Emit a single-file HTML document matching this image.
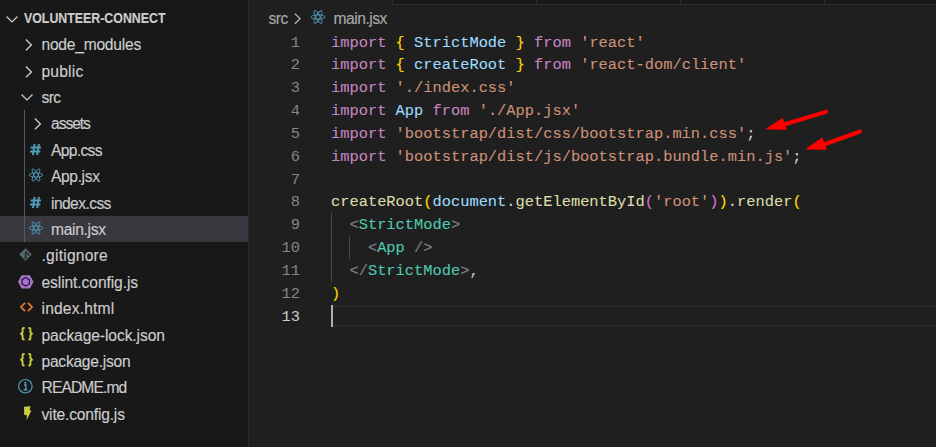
<!DOCTYPE html>
<html><head><meta charset="utf-8"><style>
html,body{margin:0;padding:0;}
body{width:936px;height:447px;overflow:hidden;background:#1f1f1f;position:relative;font-family:"Liberation Sans",sans-serif;}
#side{position:absolute;left:0;top:0;width:248px;height:447px;background:#181818;}
#sb{position:absolute;left:248px;top:0;width:1px;height:447px;background:#2b2b2b;}
.row{position:absolute;left:0;width:248px;height:26.4px;}
.lbl{position:absolute;color:#cccccc;-webkit-text-stroke:0.15px currentColor;font-size:15.6px;letter-spacing:0.0px;white-space:nowrap;line-height:26.4px;top:1.0px;}
.sel{background:#37373d;}
.guide{position:absolute;left:24px;width:1px;background:#585858;}
svg{position:absolute;overflow:visible;}
#tabs{position:absolute;left:392px;top:0;width:544px;height:4px;background:#181818;border-left:1px solid #2b2b2b;border-bottom:1px solid #2b2b2b;}
.tsep{position:absolute;top:0;width:1px;height:4px;background:#2b2b2b;}
.cl{position:absolute;left:0;width:936px;height:22.83px;}
.code{position:absolute;-webkit-text-stroke:0.1px currentColor;left:331.0px;top:1.0px;font-family:"Liberation Mono",monospace;font-size:15.39px;letter-spacing:0.0px;white-space:pre;color:#cccccc;line-height:22.83px;}
.ln{position:absolute;right:636px;top:1.0px;text-align:right;font-family:"Liberation Mono",monospace;font-size:15.39px;color:#6e7681;line-height:22.83px;}
.k{color:#c586c0}.s{color:#ce9178}.v{color:#9cdcfe}.f{color:#dcdcaa}.t{color:#4ec9b0}.g{color:#808080}.b1{color:#ffd700}.b2{color:#da70d6}
</style></head><body>
<div id="side"><div class="row" style="top:4.70px"><svg style="left:5.8px;top:10.9px" width="12" height="7" viewBox="0 0 12 7"><path d="M0.5 0.6 L6 5.9 L11.5 0.6" fill="none" stroke="#cccccc" stroke-width="1.35"/></svg><div class="lbl" style="left:24px;top:0px;font-weight:bold;font-size:13.9px;letter-spacing:0px;transform:scaleX(0.8900);transform-origin:0 0">VOLUNTEER-CONNECT</div></div><div class="row" style="top:31.10px"><svg style="left:24.6px;top:8px" width="8" height="12" viewBox="0 0 8 12"><path d="M0.9 0.5 L6.4 5.9 L0.9 11.3" fill="none" stroke="#cccccc" stroke-width="1.35"/></svg><div class="lbl" style="left:41.5px;letter-spacing:-0.238px">node_modules</div></div><div class="row" style="top:57.50px"><svg style="left:24.6px;top:8px" width="8" height="12" viewBox="0 0 8 12"><path d="M0.9 0.5 L6.4 5.9 L0.9 11.3" fill="none" stroke="#cccccc" stroke-width="1.35"/></svg><div class="lbl" style="left:41.5px;letter-spacing:0.200px">public</div></div><div class="row" style="top:83.90px"><svg style="left:21.2px;top:9.8px" width="12" height="7" viewBox="0 0 12 7"><path d="M0.5 0.6 L6 5.9 L11.5 0.6" fill="none" stroke="#cccccc" stroke-width="1.35"/></svg><div class="lbl" style="left:41.5px;letter-spacing:-0.600px">src</div></div><div class="row" style="top:110.30px"><svg style="left:34.2px;top:8px" width="8" height="12" viewBox="0 0 8 12"><path d="M0.9 0.5 L6.4 5.9 L0.9 11.3" fill="none" stroke="#cccccc" stroke-width="1.35"/></svg><div class="lbl" style="left:51px;letter-spacing:-1.040px">assets</div></div><div class="row" style="top:136.70px"><svg style="left:29.9px;top:7.300000000000011px" width="11" height="11" viewBox="0 0 11 11"><path d="M4.6 0 L2.9 11 M8.9 0 L7.2 11 M0.6 3.6 H11 M0 7.4 H10.4" fill="none" stroke="#519aba" stroke-width="2"/></svg><div class="lbl" style="left:51px;letter-spacing:-0.667px">App.css</div></div><div class="row" style="top:163.10px"><svg style="left:27.6px;top:5.30000000000004px" width="16" height="14" viewBox="-8 -7 16 14"><g fill="none" stroke="#519aba" stroke-width="0.85"><ellipse rx="6.9" ry="2.05"/><ellipse rx="6.9" ry="2.05" transform="rotate(60)"/><ellipse rx="6.9" ry="2.05" transform="rotate(-60)"/></g></svg><div class="lbl" style="left:51px;letter-spacing:-0.366px">App.jsx</div></div><div class="row" style="top:189.50px"><svg style="left:29.9px;top:7.300000000000011px" width="11" height="11" viewBox="0 0 11 11"><path d="M4.6 0 L2.9 11 M8.9 0 L7.2 11 M0.6 3.6 H11 M0 7.4 H10.4" fill="none" stroke="#519aba" stroke-width="2"/></svg><div class="lbl" style="left:51px;letter-spacing:-0.575px">index.css</div></div><div class="row sel" style="top:215.90px"><svg style="left:27.6px;top:5.30000000000004px" width="16" height="14" viewBox="-8 -7 16 14"><g fill="none" stroke="#519aba" stroke-width="0.85"><ellipse rx="6.9" ry="2.05"/><ellipse rx="6.9" ry="2.05" transform="rotate(60)"/><ellipse rx="6.9" ry="2.05" transform="rotate(-60)"/></g></svg><div class="lbl" style="left:51px;letter-spacing:-0.316px">main.jsx</div></div><div class="row" style="top:242.30px"><svg style="left:19px;top:5.600000000000023px" width="13" height="13" viewBox="0 0 13 13"><path d="M6.5 0.2 L12.8 6.5 L6.5 12.8 L0.2 6.5 Z" fill="#56676e"/><path d="M6.6 3.4 V10 M6.6 3.6 L9.6 6.6" stroke="#1e2629" stroke-width="1.3" fill="none"/><circle cx="6.6" cy="10" r="1.1" fill="#1e2629"/><circle cx="9.5" cy="6.6" r="0.9" fill="#1e2629"/></svg><div class="lbl" style="left:41.5px;letter-spacing:0.223px">.gitignore</div></div><div class="row" style="top:268.70px"><svg style="left:18.3px;top:6.0px" width="16" height="14" viewBox="0 0 16 14"><path d="M3.6 0.2 H11.9 L15.5 6.8 L11.9 13.4 H3.6 L0 6.8 Z" fill="#a676c8"/><path d="M7.75 2.5 L11.4 4.65 V8.95 L7.75 11.1 L4.1 8.95 V4.65 Z" fill="none" stroke="#2a1545" stroke-width="1.3"/></svg><div class="lbl" style="left:41.5px;letter-spacing:-0.092px">eslint.config.js</div></div><div class="row" style="top:295.10px"><svg style="left:19.6px;top:7.400000000000034px" width="13" height="10" viewBox="0 0 13 10"><path d="M5 0.8 L1 5 L5 9.2 M8 0.8 L12 5 L8 9.2" fill="none" stroke="#e37933" stroke-width="1.8"/></svg><div class="lbl" style="left:41.5px;letter-spacing:0.177px">index.html</div></div><div class="row" style="top:321.50px"><svg style="left:19.6px;top:5.300000000000068px" width="13" height="13.5" viewBox="0 0 13 13.5"><path d="M4.6 1 H3.7 Q2.6 1 2.6 2.1 V5.3 L1.1 6.75 L2.6 8.2 V11.4 Q2.6 12.5 3.7 12.5 H4.6" fill="none" stroke="#cbcb41" stroke-width="1.9" stroke-linejoin="miter"/><path d="M8.4 1 H9.3 Q10.4 1 10.4 2.1 V5.3 L11.9 6.75 L10.4 8.2 V11.4 Q10.4 12.5 9.3 12.5 H8.4" fill="none" stroke="#cbcb41" stroke-width="1.9" stroke-linejoin="miter"/></svg><div class="lbl" style="left:41.5px;letter-spacing:-0.086px">package-lock.json</div></div><div class="row" style="top:347.90px"><svg style="left:19.6px;top:5.300000000000068px" width="13" height="13.5" viewBox="0 0 13 13.5"><path d="M4.6 1 H3.7 Q2.6 1 2.6 2.1 V5.3 L1.1 6.75 L2.6 8.2 V11.4 Q2.6 12.5 3.7 12.5 H4.6" fill="none" stroke="#cbcb41" stroke-width="1.9" stroke-linejoin="miter"/><path d="M8.4 1 H9.3 Q10.4 1 10.4 2.1 V5.3 L11.9 6.75 L10.4 8.2 V11.4 Q10.4 12.5 9.3 12.5 H8.4" fill="none" stroke="#cbcb41" stroke-width="1.9" stroke-linejoin="miter"/></svg><div class="lbl" style="left:41.5px;letter-spacing:-0.253px">package.json</div></div><div class="row" style="top:374.30px"><svg style="left:18.3px;top:4.900000000000034px" width="15" height="15" viewBox="0 0 15 15"><circle cx="7.35" cy="7.25" r="6.75" fill="none" stroke="#519aba" stroke-width="1.2"/><circle cx="7.35" cy="3.9" r="1.05" fill="#519aba"/><path d="M6 6 H7.9 V10.6 M5.6 10.8 H9.3" fill="none" stroke="#519aba" stroke-width="1.4"/></svg><div class="lbl" style="left:41.5px;letter-spacing:-0.875px">README.md</div></div><div class="row" style="top:400.70px"><svg style="left:22.8px;top:4.900000000000034px" width="9" height="15" viewBox="0 0 9 15"><path d="M1.1 0.7 L7.4 0.3 L6.7 4.3 L8.3 4.7 L3.6 14.3 L3.8 9.2 L1.1 8.8 Z" fill="#cbcb41"/></svg><div class="lbl" style="left:41.5px;letter-spacing:-0.183px">vite.config.js</div></div><div class="guide" style="top:110.30px;height:132.00px"></div></div><div id="sb"></div>
<div id="tabs"><div class="tsep" style="left:143px"></div><div class="tsep" style="left:287px"></div><div class="tsep" style="left:431px"></div></div>
<div class="lbl" style="left:268.5px;top:8.3px;color:#a9a9a9;line-height:22px;letter-spacing:-0.500px">src</div><svg style="left:294.3px;top:12.9px" width="7" height="12" viewBox="0 0 7 12"><path d="M0.8 0.6 L6.1 5.7 L0.8 10.8" fill="none" stroke="#b4b4b4" stroke-width="1.3"/></svg><svg style="left:310.4px;top:10.399999999999999px" width="16" height="14" viewBox="-8 -7 16 14"><g fill="none" stroke="#519aba" stroke-width="0.9"><ellipse rx="7.1" ry="2.15"/><ellipse rx="7.1" ry="2.15" transform="rotate(60)"/><ellipse rx="7.1" ry="2.15" transform="rotate(-60)"/></g></svg><div class="lbl" style="left:333.6px;top:8.3px;color:#a9a9a9;line-height:22px;letter-spacing:-0.486px">main.jsx</div>
<div class="cl" style="top:30.60px"><div class="ln" style="color:#858585">1</div><div class="code"><span class="k">import</span> <span class="b1">{</span> <span class="v">StrictMode</span> <span class="b1">}</span> <span class="k">from</span> <span class="s">'react'</span></div></div><div class="cl" style="top:53.43px"><div class="ln" style="color:#858585">2</div><div class="code"><span class="k">import</span> <span class="b1">{</span> <span class="v">createRoot</span> <span class="b1">}</span> <span class="k">from</span> <span class="s">'react-dom/client'</span></div></div><div class="cl" style="top:76.26px"><div class="ln" style="color:#858585">3</div><div class="code"><span class="k">import</span> <span class="s">'./index.css'</span></div></div><div class="cl" style="top:99.09px"><div class="ln" style="color:#858585">4</div><div class="code"><span class="k">import</span> <span class="v">App</span> <span class="k">from</span> <span class="s">'./App.jsx'</span></div></div><div class="cl" style="top:121.92px"><div class="ln" style="color:#858585">5</div><div class="code"><span class="k">import</span> <span class="s">'bootstrap/dist/css/bootstrap.min.css'</span>;</div></div><div class="cl" style="top:144.75px"><div class="ln" style="color:#858585">6</div><div class="code"><span class="k">import</span> <span class="s">'bootstrap/dist/js/bootstrap.bundle.min.js'</span>;</div></div><div class="cl" style="top:167.58px"><div class="ln" style="color:#858585">7</div><div class="code"></div></div><div class="cl" style="top:190.41px"><div class="ln" style="color:#858585">8</div><div class="code"><span class="f">createRoot</span><span class="b1">(</span><span class="v">document</span>.<span class="f">getElementById</span><span class="b2">(</span><span class="s">'root'</span><span class="b2">)</span><span class="b1">)</span>.<span class="f">render</span><span class="b1">(</span></div></div><div class="cl" style="top:213.24px"><div class="ln" style="color:#858585">9</div><div class="code">  <span class="g">&lt;</span><span class="t">StrictMode</span><span class="g">&gt;</span></div></div><div class="cl" style="top:236.07px"><div class="ln" style="color:#858585">10</div><div class="code">    <span class="g">&lt;</span><span class="t">App</span> <span class="g">/&gt;</span></div></div><div class="cl" style="top:258.90px"><div class="ln" style="color:#858585">11</div><div class="code">  <span class="g">&lt;/</span><span class="t">StrictMode</span><span class="g">&gt;</span>,</div></div><div class="cl" style="top:281.73px"><div class="ln" style="color:#858585">12</div><div class="code"><span class="b1">)</span></div></div><div class="cl" style="top:304.56px"><div class="ln" style="color:#cccccc">13</div><div class="code"></div></div><div style="position:absolute;left:332px;top:304.56px;width:604px;height:18.83px;border-top:2px solid #282828;border-bottom:2px solid #282828"></div><div style="position:absolute;left:330.8px;top:305.06px;width:2.3px;height:21.83px;background:#aeafad"></div><div style="position:absolute;left:331px;top:213.24px;width:1px;height:68.49px;background:#4a4a4a"></div><div style="position:absolute;left:349px;top:236.07px;width:1px;height:22.83px;background:#4a4a4a"></div>
<svg style="left:0;top:0" width="936" height="447" viewBox="0 0 936 447"><g fill="#ff0000" stroke="#ff0000"><line x1="784" y1="124.5" x2="826" y2="111.8" stroke-width="4.0" stroke-linecap="round"/><path d="M766.4 128.9 L782.4 118.5 L786.2 129.3 Z" stroke-width="1" stroke-linejoin="round"/><line x1="824" y1="144.5" x2="860" y2="131.5" stroke-width="4.0" stroke-linecap="round"/><path d="M806.4 148.9 L822.1 138.1 L826.2 149.3 Z" stroke-width="1" stroke-linejoin="round"/></g></svg>
</body></html>
